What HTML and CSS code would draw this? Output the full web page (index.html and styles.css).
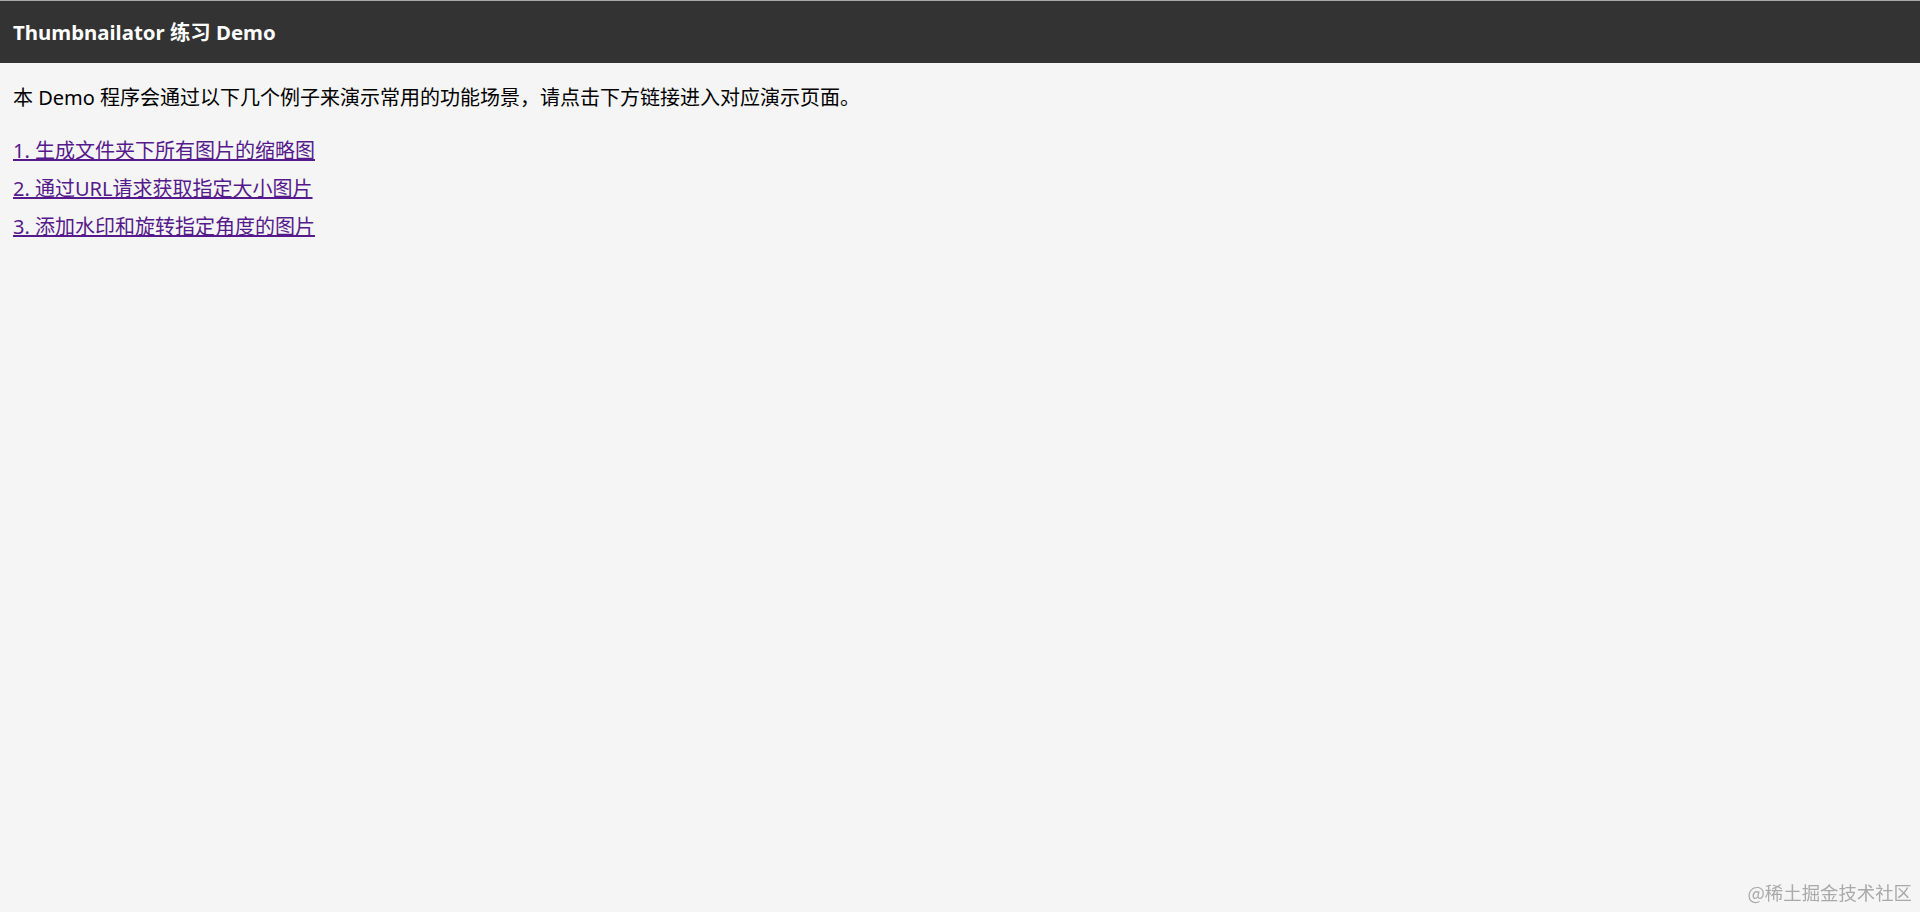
FILE: index.html
```html
<!DOCTYPE html>
<html lang="zh-CN">
<head>
<meta charset="utf-8">
<title>Thumbnailator 练习 Demo</title>
<link rel="stylesheet" href="styles.css">
</head>
<body>
<header class="topbar">Thumbnailator 练习 Demo</header>
<main class="content">
  <p class="intro">本 Demo 程序会通过以下几个例子来演示常用的功能场景，请点击下方链接进入对应演示页面。</p>
  <nav class="links">
    <a class="link" href="#">1. 生成文件夹下所有图片的缩略图</a>
    <a class="link" href="#">2. 通过URL请求获取指定大小图片</a>
    <a class="link" href="#">3. 添加水印和旋转指定角度的图片</a>
  </nav>
</main>
<div class="watermark">@稀土掘金技术社区</div>
</body>
</html>
```

FILE: styles.css
```css
html, body {
  margin: 0;
  padding: 0;
  height: 100%;
}
body {
  background: #f5f5f5;
  color: #000;
  font-family: "Noto Sans", "Noto Sans CJK SC", sans-serif;
  font-size: 20px;
  overflow: hidden;
}
.topbar {
  border-top: 1px solid #a8a8a8;
  background: #333333;
  color: #fff;
  height: 62px;
  line-height: 62px;
  padding: 0 13px;
  font-size: 20.4px;
  font-weight: bold;
}
.content {
  padding: 0 13px;
}
.intro {
  margin: 20px 0 19px;
  line-height: 30px;
}
.links {
  display: flex;
  flex-direction: column;
  align-items: flex-start;
}
.link {
  line-height: 38px;
  color: #551a8b;
  text-decoration: underline;
}
.watermark {
  position: fixed;
  right: 8px;
  bottom: 7px;
  color: #a9a9a9;
  font-size: 18.4px;
  font-family: "Noto Sans CJK SC", sans-serif;
}
```
